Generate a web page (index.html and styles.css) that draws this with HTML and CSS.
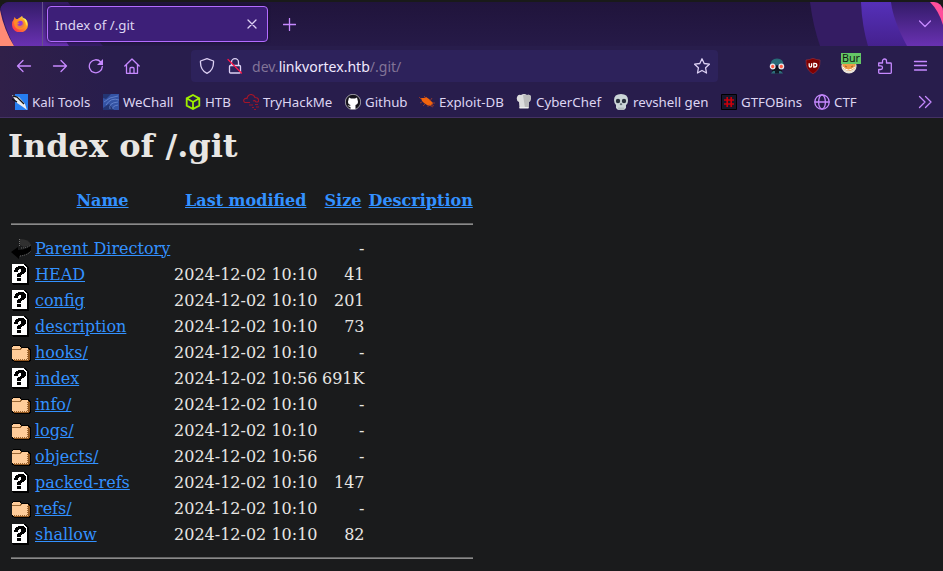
FILE: index.html
```html
<!DOCTYPE html>
<html lang="en">
<head>
<meta charset="utf-8">
<title>Index of /.git</title>
<link rel="stylesheet" href="styles.css">
</head>
<body>
<svg class="defs" width="0" height="0">
  <defs>
    <linearGradient id="violet" x1="0" y1="0" x2="0" y2="1"><stop offset="0" stop-color="#331b68"/><stop offset="1" stop-color="#6931b2"/></linearGradient>
    <linearGradient id="indigo" x1="0" y1="0" x2="0" y2="1"><stop offset="0" stop-color="#5530b9"/><stop offset="1" stop-color="#45218e"/></linearGradient>
    <linearGradient id="fire" x1="1" y1="0" x2="0" y2="1"><stop offset="0" stop-color="#fff44f"/><stop offset=".4" stop-color="#ff9a22"/><stop offset="1" stop-color="#ff195e"/></linearGradient>
    <symbol id="unknown" viewBox="0 0 20 22" shape-rendering="crispEdges">
      <path d="M1 1h14l3 4v17H2v-1H1z" fill="#000"/><path d="M1 1h11v4h4v15H1z" fill="#fff"/><path d="M12 1h1v1h1v1h1v1h1v1h-4z" fill="#fff"/>
      <path d="M3 7h1V5h1V4h2V3h5v1h2v1h1v4h-1v1h-1v1h-2v1h-1v2H6v-3h1v-1h2V9h1V6H8v1H7v2H3zM6 15h4v3H6z" fill="#000"/><path d="M11 3h1v3h3" fill="none" stroke="#000"/>
    </symbol>
    <symbol id="folder" viewBox="0 0 20 22" shape-rendering="crispEdges">
      <path d="M2 4h8v2h8v1h1v1h1v12h-1v1H3v-1H1V5h1z" fill="#000"/><path d="M17 8h1v1h1v10h-1v1H3v-1h14z" fill="#965a22"/><path d="M1 6h1V5h7v1h1v1h7v12H2v-1H1z" fill="#ffcc99"/><path d="M1 8.500h8V7.500h2" fill="none" stroke="#996633"/><path d="M3 18.500h14M16.500 9v10" fill="none" stroke="#996633" stroke-dasharray="1 1"/>
    </symbol>
    <symbol id="back" viewBox="0 0 20 22">
      <path d="M9 2q9 0 11 6l-7 2-4-2z" fill="#303030"/><path d="M0 15l7-5v3q9 0 13-5v5q-3 5-12 6v3z" fill="#000"/><path d="M8.500 2v7M9 19q8-1 11-5M10 11q6 0 10-3" fill="none" stroke="#888" stroke-width=".8" stroke-dasharray="1 1"/>
    </symbol>
  </defs>
</svg>
<div class="browser">
  <div class="tabs">
    <svg class="art" width="943" height="44" viewBox="0 0 943 44">
      <path d="M0 0H68Q82 20 103 44H0z" fill="#351b66"/>
      <path d="M0 0H43Q56 24 69 44H14Q3 23 0 0z" fill="url(#violet)"/>
      <path d="M0 8Q4 28 14 44H0z" fill="#ff8b75"/>
      <path d="M810 0H870L880 44H820Q813 24 810 0z" fill="#341c63"/>
      <path d="M861 0H895L910 44H868Q862 24 861 0z" fill="url(#indigo)"/>
      <path d="M891 0H943V44H907Q893 18 891 0z" fill="url(#violet)"/>
      <path d="M930 0H943V23Q939 9 930 0z" fill="#ff4f9a"/>
    </svg>
    <div class="ff">
      <svg width="16" height="16" viewBox="0 0 16 16"><path d="M8 1.500Q9 .500 10 0q0 2 2.500 3.500l.5-.5q3 2 3 6a8 7.500 0 0 1-16 0q0-4 2-6l.5-2 1.500 2h2q0-1 2-1.500z" fill="url(#fire)"/><circle cx="8.300" cy="8.300" r="3.600" fill="#9538d4"/><path d="M2 5q4-2 6 0-2 0-2.500 1.500 1.500 0 2 1-2 .5-2 1.500 3 2 5-.5 1-3-2-5 5-.5 5 5-1 5-6 5-5-1-5.500-6z" fill="#ff9320" fill-opacity=".75"/><path d="M10 0q0 2 2.500 4 2 3 1.500 6 2-5-.5-7-3-1-3.500-3" fill="#fff45a"/></svg>
    </div>
    <div class="tab"><span>Index of /.git</span><svg width="10" height="10" viewBox="0 0 10 10" class="line pale"><path d="M1 1l8 8M9 1L1 9"/></svg></div>
    <svg class="plus line" width="13" height="13" viewBox="0 0 13 13"><path d="M6.500 .500v12M.500 6.500h12"/></svg>
    <svg class="chev line" width="12" height="8" viewBox="0 0 12 8"><path d="M.500 1L6 6.500 11.500 1"/></svg>
  </div>
  <div class="nav">
    <div class="buttons">
      <svg class="line" width="16" height="16" viewBox="0 0 16 16"><path d="M14.500 8H1.500M7 2.500L1.500 8 7 13.500"/></svg>
      <svg class="line" width="16" height="16" viewBox="0 0 16 16"><path d="M1.500 8h13M9 2.500L14.500 8 9 13.500"/></svg>
      <svg class="line" width="16" height="16" viewBox="0 0 16 16"><path d="M14.300 8.500A6.500 6.500 0 1 1 12.700 4"/><path d="M15 1v6H9z" fill="#c689ff" stroke="none"/></svg>
      <svg class="line" width="16" height="16" viewBox="0 0 16 16"><path d="M.800 8L8 1l7.200 7M2.500 6.800v8.500h11V6.800M6 15v-4.500q0-1 1-1h2q1 0 1 1V15"/></svg>
    </div>
    <div class="url">
      <svg class="line pale" width="16" height="16" viewBox="0 0 16 16"><path d="M8 .700L14.500 3q.5 9-6.500 12.300Q1 12 1.500 3z"/></svg>
      <svg class="line pale lock" width="16" height="16" viewBox="0 0 16 16"><path d="M4.500 7.500V4.200a3.500 3.500 0 0 1 7 0v3.300M3.500 7.500h9q1 0 1 1v5.500q0 1-1 1h-9q-1 0-1-1V8.500q0-1 1-1z"/><path d="M1 1.500L14.500 15" stroke="#ff1347"/></svg>
      <span class="addr">dev.<b>linkvortex.htb</b>/.git/</span>
      <svg class="line pale" width="16" height="16" viewBox="0 0 16 16"><path d="M8 .800l2.200 4.700 5.200.7-3.800 3.600.9 5.200L8 12.500 3.500 15l.9-5.200L.600 6.200l5.200-.7z"/></svg>
    </div>
    <div class="ext">
      <svg width="16" height="16" viewBox="0 0 16 16"><path d="M1.500 7q0-6.500 6.500-6.500T14.500 7z" fill="#276a77"/><path d="M3 8h10v7H3z" fill="#10131f"/><path d="M4 13h8l2 2.500H2z" fill="#2c6e7a"/><path d="M6 12h4v3.500H6z" fill="#111827"/><circle cx="3.700" cy="8.500" r="2.300" fill="#ff5b43" stroke="#ebe8ec" stroke-width="1.300"/><circle cx="12.300" cy="8.500" r="2.300" fill="#ff5b43" stroke="#ebe8ec" stroke-width="1.300"/></svg>
      <svg width="16" height="16" viewBox="0 0 16 16"><path d="M8 .300Q12 2 15 2q.5 10-7 13.800Q.500 12 1 2q3 0 7-1.700" fill="#800000" stroke="#a43b4b" stroke-width=".5"/><path d="M4.200 5.200v2.500q0 1.300 1.200 1.300t1.200-1.300V5.200M8.800 5.400h1q2 0 2 1.800t-2 1.800h-1z" fill="none" stroke="#fff" stroke-width="1.300"/></svg>
      <div class="foxy"><svg width="16" height="16" viewBox="0 0 16 16"><circle cx="8" cy="8" r="7.600" fill="#e9e3da"/><path d="M1 4l5 2h4l5-2-1 6q-6 6-12 0z" fill="#ed9b45"/><path d="M2 9q5 6 12 0" fill="none" stroke="#fff"/><path d="M4 8l2 1M10 9l2-1" stroke="#a7612c"/></svg><span class="badge">Bur</span></div>
      <svg class="line" width="16" height="16" viewBox="0 0 16 16"><path d="M2 5h3.500V3a2 2 0 0 1 4 0v2h4q.8 0 .8.800v8.700q0 .8-.8.800H2.500q-.8 0-.8-.8V11.500h2a1.800 1.800 0 0 0 0-3.600h-2V5z"/></svg>
      <svg class="line" width="14" height="16" viewBox="0 0 14 16"><path d="M1.500 3.500h12M1.500 7.500h12M1.500 12h12"/></svg>
    </div>
  </div>
  <div class="marks">
    <a class="m1"><svg width="16" height="16" viewBox="0 0 16 16"><path d="M3 0h13v16H3z" fill="#267df0"/><path d="M0 1l7 2 6 7 2 6-4-3-6-4z" fill="#eee"/><path d="M1 2l4 1 7 7M0 5l5 3" fill="none" stroke="#111" stroke-width="1.300"/></svg>Kali Tools</a>
    <a class="m2"><svg width="16" height="16" viewBox="0 0 16 16"><path d="M0 0h16v16H0z" fill="#3453a4"/><path d="M0 0h8L3 5 0 4zM0 14l6-4 5 6H0" fill="#233573"/><path d="M1 8q5-5 14-6M3 11q5-8 13-5M7 15q-2-6 8-7M10 15q-1-3 5-4" fill="none" stroke="#7d9be0" stroke-opacity=".6"/></svg>WeChall</a>
    <a class="m3"><svg width="16" height="16" viewBox="0 0 16 16"><path d="M8 1l6.300 3.400v7.200L8 15l-6.300-3.400V4.400zM2 4.500L8 8l6-3.500M8 8v7" fill="none" stroke="#9fef00" stroke-width="1.800"/></svg>HTB</a>
    <a class="m4"><svg width="16" height="16" viewBox="0 0 16 16"><path d="M7 8.500H2q-2-1-1-3 1-1.500 3-1 1-4 4-4 3 0 4 3 3 0 3.500 2t-1 2.500H13q-1-2-3-1" fill="none" stroke="#a41529" stroke-width="1.100"/><path d="M6 11h4M12 10.500h3M9 13.500h2M13 13h3M11 15.500h2" stroke="#981528"/></svg>TryHackMe</a>
    <a class="m5"><svg width="16" height="16" viewBox="0 0 16 16"><circle cx="8" cy="8" r="7.700" fill="#15131b" stroke="#eee" stroke-width=".6"/><path d="M4 3.500l2 1h4l2-1 .6 2.500q1.400 4-2.100 5v4h-5v-2q-2 0-3-2 1.500 1 3 .5V11Q2 10 3.400 6z" fill="#fff"/></svg>Github</a>
    <a class="m6"><svg width="16" height="16" viewBox="0 0 16 16"><path d="M2 4l3 0 2-1 3 2 2 2 2 2-1 2-2 1-3-1-3-2-2-2z" fill="#f3640d"/><path d="M3 8L1 9M6 10l-2 2M9 11v2M12 10l3 2M11 7l2-3M7 4L5 2M10 11l4 2M2 5L0 3M13 9h3" stroke="#a23c28" stroke-width=".8"/></svg>Exploit-DB</a>
    <a class="m7"><svg width="16" height="16" viewBox="0 0 16 16"><path d="M3 8Q0 7 1 3q1-3 4-2 3-2 6 0 4-1 4 3 0 3-2 4l-.5 6H3.500z" fill="#ddd"/><path d="M7 1h4q4-1 4 3l-2 4-.5 6H9z" fill="#bbb"/><path d="M3.500 13h9v1.500h-9z" fill="#eee"/></svg>CyberChef</a>
    <a class="m8"><svg width="16" height="16" viewBox="0 0 16 16"><path d="M1 6q0-6 7-6t7 6q0 4-2 5v3l-2 2H5l-2-2v-3Q1 9 1 6" fill="#cbd5d8"/><circle cx="5" cy="7" r="2.200" fill="#28303c"/><circle cx="11" cy="7" r="2.200" fill="#28303c"/><path d="M8 9l1 1.700H7zM6 13.500V16M8 13.500V16M10 13.500V16" fill="#28303c" stroke="#68737a" stroke-width=".5"/></svg>revshell gen</a>
    <a class="m9"><svg width="16" height="16" viewBox="0 0 16 16"><path d="M.500 .500h15v15H.500z" fill="#17172b" stroke="#000"/><path d="M6.200 3v10M10.200 3v10M3 6h10M3 10h10" stroke="#c9000c" stroke-width="1.700"/></svg>GTFOBins</a>
    <a class="m10"><svg class="line" width="16" height="16" viewBox="0 0 16 16"><circle cx="8" cy="8" r="7.200"/><ellipse cx="8" cy="8" rx="3.400" ry="7.200"/><path d="M1 8h14"/></svg>CTF</a>
    <svg class="more line" width="14" height="14" viewBox="0 0 14 14"><path d="M1.500 1.500L7 7 1.500 12.500M7.500 1.500L13 7 7.500 12.500"/></svg>
  </div>
</div>
<main>
  <h1>Index of /.git</h1>
  <table>
    <tr class="head"><th class="ic"></th><th class="name"><a href="#">Name</a></th><th class="date"><a href="#">Last modified</a></th><th class="size"><a href="#">Size</a></th><th><a href="#">Description</a></th></tr>
    <tr><th class="rule" colspan="5"><hr></th></tr>
    <tr><td><svg><use href="#back"/></svg></td><td><a href="#">Parent Directory</a></td><td></td><td>-</td></tr>
    <tr><td><svg><use href="#unknown"/></svg></td><td><a href="#">HEAD</a></td><td>2024-12-02 10:10</td><td>41</td></tr>
    <tr><td><svg><use href="#unknown"/></svg></td><td><a href="#">config</a></td><td>2024-12-02 10:10</td><td>201</td></tr>
    <tr><td><svg><use href="#unknown"/></svg></td><td><a href="#">description</a></td><td>2024-12-02 10:10</td><td>73</td></tr>
    <tr><td><svg><use href="#folder"/></svg></td><td><a href="#">hooks/</a></td><td>2024-12-02 10:10</td><td>-</td></tr>
    <tr><td><svg><use href="#unknown"/></svg></td><td><a href="#">index</a></td><td>2024-12-02 10:56</td><td>691K</td></tr>
    <tr><td><svg><use href="#folder"/></svg></td><td><a href="#">info/</a></td><td>2024-12-02 10:10</td><td>-</td></tr>
    <tr><td><svg><use href="#folder"/></svg></td><td><a href="#">logs/</a></td><td>2024-12-02 10:10</td><td>-</td></tr>
    <tr><td><svg><use href="#folder"/></svg></td><td><a href="#">objects/</a></td><td>2024-12-02 10:56</td><td>-</td></tr>
    <tr><td><svg><use href="#unknown"/></svg></td><td><a href="#">packed-refs</a></td><td>2024-12-02 10:10</td><td>147</td></tr>
    <tr><td><svg><use href="#folder"/></svg></td><td><a href="#">refs/</a></td><td>2024-12-02 10:10</td><td>-</td></tr>
    <tr><td><svg><use href="#unknown"/></svg></td><td><a href="#">shallow</a></td><td>2024-12-02 10:10</td><td>82</td></tr>
    <tr><th class="rule" colspan="5"><hr></th></tr>
  </table>
</main>
</body>
</html>
```
FILE: styles.css
```css
* { box-sizing: border-box; }
html, body { margin: 0; height: 571px; overflow: hidden; }
body { background: #1a1b1c; color: #e8e6e3; font: 16px "DejaVu Serif", serif; }
.defs { position: absolute; }
svg { flex: none; display: block; }
.line { fill: none; stroke: #c689ff; stroke-width: 1.3; stroke-linecap: round; stroke-linejoin: round; }
.line.pale { stroke: #ddd1f4; }
.browser { height: 118px; padding-top: 2px; background: #191a19; font-family: "Noto Sans", sans-serif; color: #ddd5f2; }
.tabs { position: relative; display: flex; align-items: center; height: 44px; overflow: hidden; border-radius: 9px 9px 0 0; background: linear-gradient(#20143b, #261a48); }
.art { position: absolute; left: 0; top: 0; }
.ff { position: relative; width: 43px; height: 44px; border-right: 1px solid #67518c; padding: 14px 0 0 12px; }
.tab { position: relative; display: flex; align-items: center; justify-content: space-between; width: 221px; height: 36px; margin-left: 4px; padding: 0 10px 0 7px; border: 1px solid #b36cff; border-radius: 4px; background: #3d1f78; font-size: 13.3px; box-shadow: 0 0 3px #150b29; }
.tab span { padding-top: 2px; }
.plus { margin-left: 15px; }
.chev { position: relative; margin: 0 12px 0 auto; }
.nav { display: flex; align-items: center; height: 40px; background: linear-gradient(90deg, #302049, #281d4c 110px, #281d4c); }
.buttons { display: flex; gap: 20px; margin-left: 16px; width: 175px; }
.url { display: flex; align-items: center; width: 527px; height: 32px; padding: 0 8px; border-radius: 4px; background: #2d225b; }
.lock { margin-left: 12px; }
.addr { flex: 1; margin-left: 9px; font-size: 14.05px; color: #827497; white-space: nowrap; }
.addr b { font-weight: 400; color: #f0e9ff; }
.ext { display: flex; gap: 20px; margin-left: 51px; }
.foxy { position: relative; }
.badge { position: absolute; left: 0; top: -5px; width: 20px; height: 11px; background: #64c766; color: #101810; font-size: 10.7px; line-height: 11px; text-align: center; }
.marks { display: flex; align-items: center; height: 32px; background: linear-gradient(90deg, #302049, #281d4c 110px, #281d4c); border-bottom: 1px solid #443164; font-size: 13.3px; padding-left: 12px; }
.marks a { display: flex; align-items: center; gap: 4px; white-space: nowrap; flex: none; }
.m1 { width: 91px; } .m2 { width: 82px; } .m3 { width: 58px; } .m4 { width: 102px; } .m5 { width: 74px; }
.m6 { width: 97px; } .m7 { width: 97px; } .m8 { width: 108px; } .m9 { width: 93px; } .m10 { width: 43px; }
.more { margin: 0 11px 0 auto; }
main { padding: 9px 8px 0; }
h1 { margin: 0 0 21px; font-size: 32px; line-height: 38px; }
table { border-spacing: 2px; border-collapse: separate; table-layout: fixed; width: 467.500px; }
th, td { padding: 1px; height: 24px; line-height: 19px; white-space: nowrap; }
.ic { width: 22px; } .name { width: 137px; } .date { width: 145.500px; } .size { width: 45px; }
td:nth-child(3), td:nth-child(4) { text-align: right; }
main a { color: #3391ff; }
td svg { width: 20px; height: 22px; }
th.rule { height: 20px; }
hr { margin: 8px 0; border: 0; height: 2px; background: linear-gradient(#646464 50%, #8a8a8a 50%); }
```
